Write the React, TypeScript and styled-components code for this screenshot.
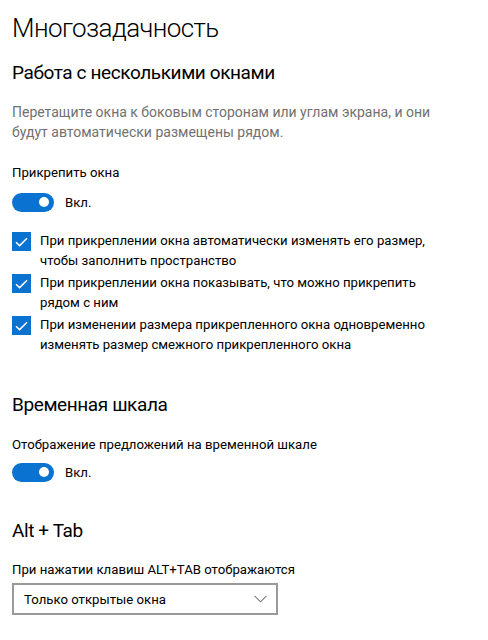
import React from "react";
import styled, { createGlobalStyle } from "styled-components";

const GlobalStyle = createGlobalStyle`
  html, body {
    margin: 0;
    padding: 0;
    background: #ffffff;
  }
  body {
    font-family: Roboto, "Noto Sans", sans-serif;
    color: #000000;
    -webkit-font-smoothing: antialiased;
  }
`;

const ACCENT = "#0a72d1";

const Page = styled.div`
  padding: 10px 12px 0 12px;
  width: 488px;
  box-sizing: border-box;
`;

const PageTitle = styled.h1`
  margin: 0;
  font-size: 26px;
  font-weight: 300;
  letter-spacing: -0.6px;
  line-height: 36px;
`;

const SectionTitle = styled.h2<{ $gap: number }>`
  margin: ${(p) => p.$gap}px 0 0 0;
  font-size: 19px;
  font-weight: 400;
  letter-spacing: -0.4px;
  line-height: 28px;
`;

const Description = styled.p`
  margin: 15px 0 0 0;
  font-size: 14px;
  line-height: 20px;
  color: #717171;
  max-width: 420px;
`;

const Label = styled.div<{ $gap: number }>`
  margin-top: ${(p) => p.$gap}px;
  font-size: 13.2px;
  line-height: 20px;
`;

const ToggleRow = styled.div<{ $gap: number }>`
  margin-top: ${(p) => p.$gap}px;
  display: flex;
  align-items: center;
  gap: 11px;
  height: 20px;
`;

const Track = styled.div`
  width: 42px;
  height: 19px;
  border-radius: 10px;
  background: ${ACCENT};
  display: flex;
  align-items: center;
  justify-content: flex-end;
  padding-right: 5px;
  box-sizing: border-box;
`;

const Knob = styled.span`
  width: 10px;
  height: 10px;
  border-radius: 50%;
  background: #ffffff;
`;

const ToggleText = styled.span`
  font-size: 13.2px;
`;

const CheckList = styled.div`
  margin-top: 19px;
  display: flex;
  flex-direction: column;
  gap: 2px;
`;

const CheckRow = styled.label`
  display: flex;
  align-items: flex-start;
  gap: 9px;
`;

const Box = styled.span`
  flex: none;
  width: 19px;
  height: 19px;
  margin-top: 1px;
  background: ${ACCENT};
  display: flex;
  align-items: center;
  justify-content: center;
`;

const CheckText = styled.span`
  font-size: 13.2px;
  line-height: 20px;
  max-width: 400px;
`;

const Select = styled.div`
  margin-top: 3px;
  width: 266px;
  height: 32px;
  box-sizing: border-box;
  border: 2px solid #9a9a9a;
  display: flex;
  align-items: center;
  justify-content: space-between;
  padding: 0 9px 0 10px;
  font-size: 13.2px;
`;

const Toggle = () => (
  <>
    <Track>
      <Knob />
    </Track>
    <ToggleText>Вкл.</ToggleText>
  </>
);

const Check = ({ children }: { children: React.ReactNode }) => (
  <CheckRow>
    <Box>
      <svg width="13" height="10" viewBox="0 0 13 10">
        <path d="M1 5.2 L4.6 8.6 L12 1.2" fill="none" stroke="#ffffff" strokeWidth="1.5" />
      </svg>
    </Box>
    <CheckText>{children}</CheckText>
  </CheckRow>
);

const App = () => {
  return (
    <Page>
      <GlobalStyle />
      <PageTitle>Многозадачность</PageTitle>

      <SectionTitle $gap={13}>Работа с несколькими окнами</SectionTitle>
      <Description>
        Перетащите окна к боковым сторонам или углам экрана, и они будут
        автоматически размещены рядом.
      </Description>
      <Label $gap={21}>Прикрепить окна</Label>
      <ToggleRow $gap={9}>
        <Toggle />
      </ToggleRow>
      <CheckList>
        <Check>
          При прикреплении окна автоматически изменять его размер, чтобы
          заполнить пространство
        </Check>
        <Check>
          При прикреплении окна показывать, что можно прикрепить рядом с ним
        </Check>
        <Check>
          При изменении размера прикрепленного окна одновременно изменять
          размер смежного прикрепленного окна
        </Check>
      </CheckList>

      <SectionTitle $gap={36}>Временная шкала</SectionTitle>
      <Label $gap={16}>Отображение предложений на временной шкале</Label>
      <ToggleRow $gap={7}>
        <Toggle />
      </ToggleRow>

      <SectionTitle $gap={35}>Alt + Tab</SectionTitle>
      <Label $gap={15}>При нажатии клавиш ALT+TAB отображаются</Label>
      <Select>
        <span>Только открытые окна</span>
        <svg width="13" height="8" viewBox="0 0 13 8">
          <path d="M0.5 0.8 L6.5 6.8 L12.5 0.8" fill="none" stroke="#7a7a7a" strokeWidth="1.1" />
        </svg>
      </Select>
    </Page>
  );
};

export default App;
